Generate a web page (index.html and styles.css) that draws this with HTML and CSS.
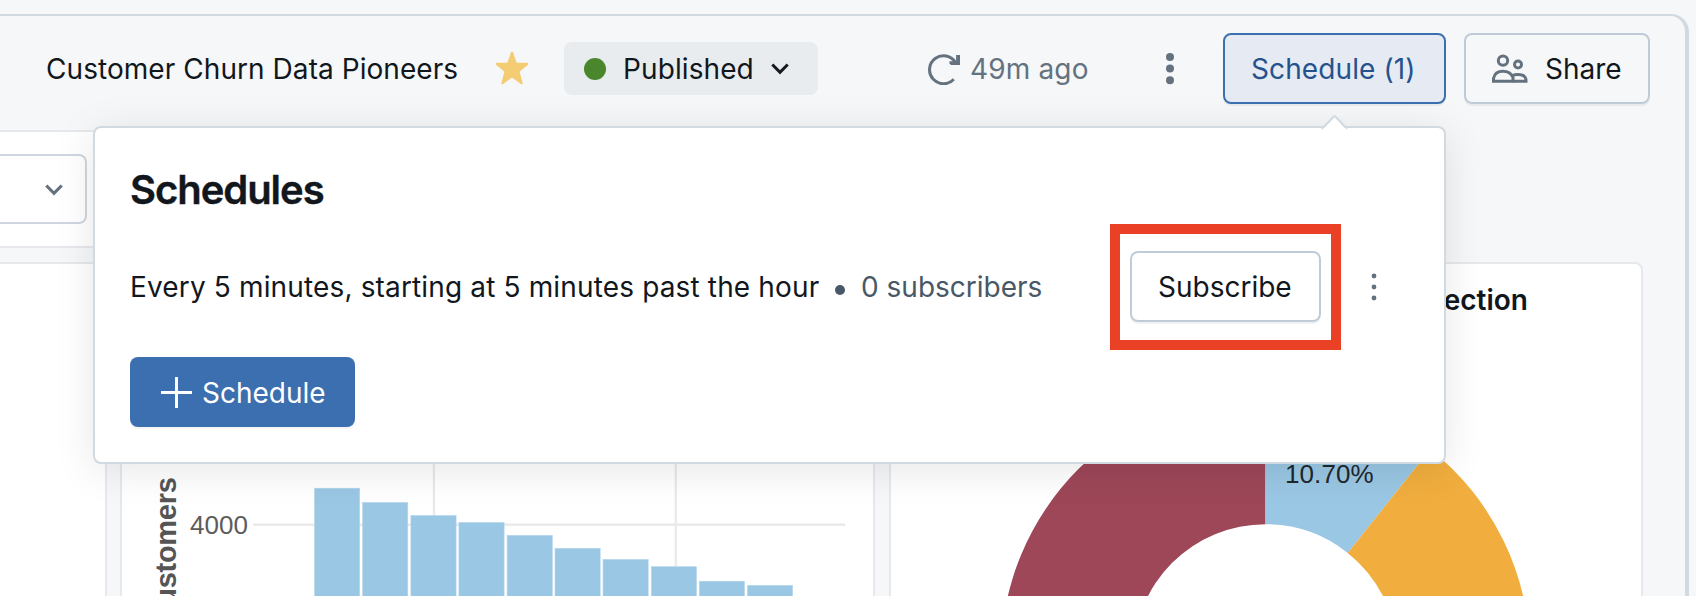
FILE: index.html
```html
<!DOCTYPE html>
<html lang="en">
<head>
<meta charset="utf-8">
<title>Customer Churn Data Pioneers</title>
<link rel="stylesheet" href="styles.css">
</head>
<body>
<div class="frame">
  <header class="header">
    <span class="title">Customer Churn Data Pioneers</span>
    <svg class="star" width="34" height="34" viewBox="0 0 34 34"><path d="M17 2 L20.8 13 L32 13 L23.2 20.2 L26.5 32 L17 25 L7.500 32 L10.800 20.200 L2 13 L13.200 13 Z" fill="#f4cc74" stroke="#f4cc74" stroke-width="2.400" stroke-linejoin="round"/></svg>
    <div class="status">
      <span class="status-dot"></span>
      <span class="status-text">Published</span>
      <svg class="status-chevron" width="18" height="12" viewBox="0 0 18 12"><path d="M1.300 1.500 L9 9.300 L16.700 1.500" fill="none" stroke="#161b22" stroke-width="3"/></svg>
    </div>
    <div class="refresh">
      <svg width="32" height="32" viewBox="0 0 32 32" fill="none" stroke="#64727f" stroke-width="3"><path d="M25.800 26.300 A14 14 0 1 1 27.500 9.500"/><path d="M29.500 2 V9.700 H21.500 M22.500 10.500 H31 V2" stroke-width="2.800"/></svg>
      <span class="refresh-text">49m ago</span>
    </div>
    <svg class="kebab" width="8" height="32" viewBox="0 0 8 32" fill="#64727f"><circle cx="4" cy="4" r="4"/><circle cx="4" cy="15.600" r="4"/><circle cx="4" cy="27.200" r="4"/></svg>
    <button class="btn btn-active"><span class="schedule-count">Schedule (1)</span></button>
    <button class="btn btn-share">
      <svg width="36" height="30" viewBox="0 0 36 30" fill="none" stroke="#64727f" stroke-width="3"><circle cx="11" cy="6.600" r="4.700"/><circle cx="26" cy="10.500" r="3.500"/><path d="M1.500 27.300 V24.500 C2.500 19.500 6.500 17.300 11 17.300 C15.800 17.300 19.500 20 21 23.500 V27.300 Z"/><path d="M20 21.800 C22 20.900 24 20.600 26 20.600 C30.500 20.600 33.500 22.800 34 25.500 V27.300 H21"/></svg>
      <span class="share-text">Share</span>
    </button>
  </header>

  <div class="filters">
    <div class="select"><svg width="18" height="12" viewBox="0 0 18 12"><path d="M1.300 1.500 L9 9.300 L16.700 1.500" fill="none" stroke="#64727f" stroke-width="3.200"/></svg></div>
  </div>

  <main class="cards">
    <section class="card card-left"></section>
    <section class="card card-bars">
      <svg width="751" height="332" viewBox="122 264 751 332">
        <g fill="#e9e9e9"><rect x="253" y="523.500" width="592" height="2.400"/><rect x="432.800" y="264" width="2.200" height="332"/><rect x="674.700" y="264" width="2.200" height="332"/></g>
        <g fill="#9ac7e4" stroke="#b3d6eb" stroke-width="0.600">
          <rect x="314.500" y="488.200" width="45.200" height="120"/><rect x="362.600" y="502.500" width="45.200" height="120"/><rect x="410.900" y="515.500" width="45.200" height="120"/><rect x="458.900" y="522.500" width="45.200" height="120"/><rect x="507.100" y="535.300" width="45.200" height="120"/><rect x="555" y="548.300" width="45.200" height="120"/><rect x="603" y="559.400" width="45.200" height="120"/><rect x="651.300" y="566.700" width="45.200" height="120"/><rect x="699.300" y="581.200" width="45.200" height="120"/><rect x="747.400" y="585.400" width="45.200" height="120"/>
        </g>
        <text class="tick" x="190" y="533.500">4000</text>
        <text class="axis" transform="translate(175.500 477.500) rotate(-90)" text-anchor="end">Customers</text>
      </svg>
    </section>
    <section class="card card-donut">
      <svg width="750" height="332" viewBox="891 264 750 332">
        <path fill="#9d4759" d="M1265.500 391.600 A264.600 264.600 0 0 0 1000.900 656.200 H1133.500 A132 132 0 0 1 1265.500 524.200 Z"/>
        <path fill="#9ac7e4" d="M1265.500 391.600 A264.600 264.600 0 0 1 1430.300 449.200 L1347.700 552.900 A132 132 0 0 0 1265.500 524.200 Z"/>
        <path fill="#f1ae3e" d="M1430.300 449.200 A264.600 264.600 0 0 1 1530.100 656.200 H1397.500 A132 132 0 0 0 1347.700 552.900 Z"/>
        <text class="slice" x="1285" y="483">10.70%</text>
        <text class="card-title" x="1528" y="310" text-anchor="end">ection</text>
      </svg>
    </section>
  </main>
</div>

<div class="popover">
  <svg class="arrow" width="28" height="15" viewBox="0 0 28 15"><path d="M1 14 L12.600 1.800 Q13.600 0.800 14.600 1.800 L26 14" fill="#fff" stroke="#d1d9e1" stroke-width="2"/><rect x="2.500" y="13" width="22.500" height="2" fill="#fff"/></svg>
  <h2 class="heading">Schedules</h2>
  <div class="row">
    <span class="rule">Every 5 minutes, starting at 5 minutes past the hour</span>
    <span class="bullet"></span>
    <span class="subs">0 subscribers</span>
    <div class="highlight"><button class="btn btn-sub"><span class="sub-text">Subscribe</span></button></div>
    <svg class="row-kebab" width="6" height="28" viewBox="0 0 6 28" fill="#64727f"><circle cx="3" cy="3" r="2.400"/><circle cx="3" cy="14" r="2.400"/><circle cx="3" cy="25" r="2.400"/></svg>
  </div>
  <button class="btn-primary">
    <svg width="31" height="31" viewBox="0 0 31 31"><path d="M15.500 0 V31 M0 15.500 H31" stroke="#fff" stroke-width="3"/></svg>
    <span class="primary-text">Schedule</span>
  </button>
</div>
</body>
</html>
```
FILE: styles.css
```css
* { box-sizing: border-box; }
html, body { margin: 0; height: 596px; overflow: hidden; }
body {
  background: #f6f7f9;
  color: #11171c;
  font: 28px/36px Inter, "Liberation Sans", sans-serif;
  position: relative;
  padding-top: 14px;
}
svg { display: block; flex: none; }
span, h2 { white-space: nowrap; flex: none; }
button { font: inherit; color: inherit; }

.frame {
  width: 1689px;
  height: 582px;
  overflow: hidden;
  border: 2px solid #d1d9e1;
  border-width: 2px 4px 0 0;
  border-radius: 0 18px 0 0;
}
.header {
  height: 114px;
  padding: 17px 0 0 46px;
  display: flex;
  align-items: flex-start;
}
.title { width: 449px; margin-top: 18px; letter-spacing: 0.06px; }
.star { margin-top: 18px; }
.status {
  width: 254px;
  height: 53px;
  margin: 9px 0 0 35px;
  padding-left: 20px;
  border-radius: 8px;
  background: #e8ecef;
  display: flex;
  align-items: center;
}
.status-dot { width: 22px; height: 22px; border-radius: 50%; background: #4a862b; margin-right: 17px; }
.status-text { width: 148px; letter-spacing: 0.1px; }
.refresh {
  width: 238px;
  margin: 18px 0 0 110px;
  display: flex;
  align-items: center;
  gap: 10px;
  color: #64727f;
  letter-spacing: 0.15px;
}
.kebab { margin: 20px 0 0 0; }
.btn {
  height: 71px;
  padding: 0;
  flex: none;
  display: flex;
  align-items: center;
  border: 2px solid #c0cbd8;
  border-radius: 8px;
  background: transparent;
  box-shadow: 0 2px 0 rgba(0, 0, 0, 0.05);
}
.btn-active {
  width: 223px;
  margin-left: 49px;
  padding-left: 26px;
  border-color: #3a70b0;
  background: #e6ebf3;
  color: #25528c;
  letter-spacing: 0.1px;
}
.btn-share { width: 186px; margin-left: 18px; padding-left: 26px; gap: 17px; }

.filters {
  width: 1000px;
  height: 118px;
  border: 2px solid #e6e8ec;
  border-width: 2px 0;
  background: #fff;
  padding-top: 22px;
}
.select {
  width: 87px;
  height: 70px;
  border: 2px solid #d0d6e0;
  border-left: 0;
  border-radius: 0 8px 8px 0;
  display: flex;
  align-items: center;
  justify-content: flex-end;
  padding: 2px 22px 0 0;
}
.cards { display: flex; margin-top: 14px; height: 334px; }
.card { background: #fff; border: 2px solid #e6e8ec; border-bottom: 0; flex: none; }
.card-left { width: 107px; border-left: 0; border-radius: 0 8px 0 0; }
.card-bars { width: 755px; margin-left: 13px; border-radius: 8px 8px 0 0; }
.card-donut { width: 754px; margin-left: 14px; border-radius: 8px 8px 0 0; }
.tick, .slice { font: 26px "Liberation Sans", sans-serif; }
.tick { fill: #5c5c5c; }
.slice { fill: #1f272d; letter-spacing: 0.1px; }
.axis { font: bold 29px "Liberation Sans", sans-serif; letter-spacing: -0.3px; fill: #555; }
.card-title { font-weight: 600; font-size: 28px; fill: #11171c; }

.popover {
  position: absolute;
  left: 93px;
  top: 126px;
  width: 1353px;
  height: 338px;
  padding: 38px 0 0 35px;
  border: 2px solid #d1d9e1;
  border-radius: 8px;
  background: #fff;
  box-shadow: 0 6px 40px rgba(0, 0, 0, 0.1);
}
.arrow { position: absolute; left: 1226px; top: -13px; }
.heading { margin: 0; font-size: 40px; line-height: 48px; font-weight: 600; letter-spacing: -1.05px; -webkit-text-stroke: 0.4px #11171c; }
.row { display: flex; align-items: center; height: 126px; margin-top: 10px; }
.rule { width: 705px; letter-spacing: 0.147px; }
.bullet { width: 10px; height: 10px; margin: 6px 16px 0 0; border-radius: 50%; background: #495867; }
.subs { width: 249px; color: #495867; }
.highlight { width: 231px; height: 126px; border: 10px solid #ea4025; padding: 17px 0 0 10px; flex: none; }
.btn-sub { width: 191px; padding-left: 26px; }
.row-kebab { margin-left: 30px; }
.btn-primary {
  width: 225px;
  height: 70px;
  margin-top: 7px;
  padding: 0 0 0 31px;
  display: flex;
  align-items: center;
  gap: 10px;
  border: 0;
  border-radius: 8px;
  background: #3b6faf;
  color: #fff;
  box-shadow: 0 2px 0 rgba(0, 0, 0, 0.04);
}
.primary-text { padding-top: 2px; }
```
